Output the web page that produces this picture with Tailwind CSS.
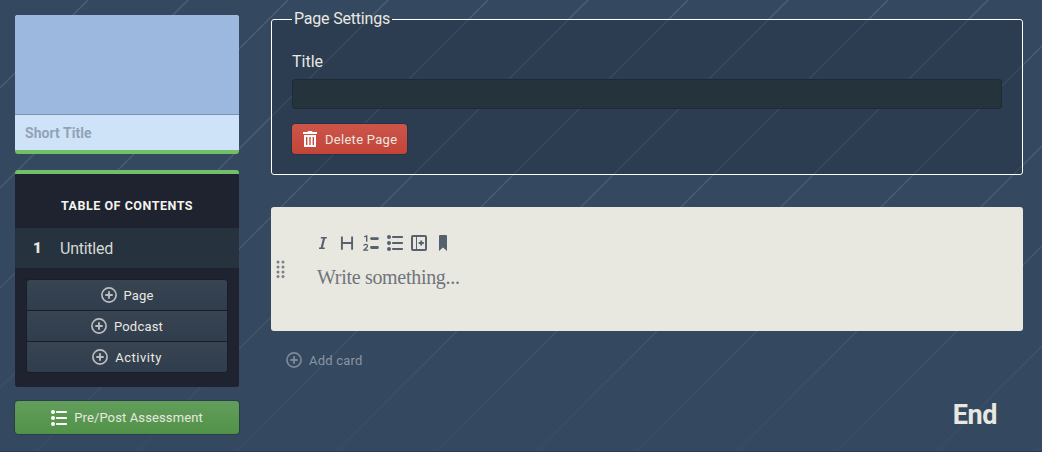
<!DOCTYPE html>
<html lang="en">
<head>
<meta charset="utf-8">
<title>Page editor</title>
<script src="https://cdn.jsdelivr.net/npm/@tailwindcss/browser@4"></script>
</head>
<body class="relative h-[452px] w-[1042px] overflow-hidden bg-[#34485f] font-['Roboto',sans-serif] text-[#e8e8e0]">
<svg class="absolute inset-0" width="1042" height="452">
  <defs>
    <pattern id="stripes" width="100" height="100" patternUnits="userSpaceOnUse">
      <path d="M-22 110L110 -22M78 110L110 78M-22 10L10 -22" stroke="#495d76" stroke-width="1.5" fill="none"/>
    </pattern>
    <linearGradient id="fade" x1="0" y1="0" x2="0" y2="1">
      <stop offset="0" stop-color="#34485f" stop-opacity="0"/>
      <stop offset="0.45" stop-color="#34485f" stop-opacity="0.1"/>
      <stop offset="1" stop-color="#34485f" stop-opacity="0.85"/>
    </linearGradient>
    <symbol id="plus" viewBox="0 0 16 16"><circle cx="8" cy="8" r="7.1" fill="none" stroke="currentColor" stroke-width="1.7"/><path d="M8 4.3v7.4M4.3 8h7.4" stroke="currentColor" stroke-width="1.9"/></symbol>
    <symbol id="list" viewBox="0 0 16 16"><g fill="currentColor"><circle cx="2" cy="2" r="2"/><circle cx="2" cy="8" r="2"/><circle cx="2" cy="14" r="2"/><rect x="5" y="1" width="11" height="2" rx=".8"/><rect x="5" y="7" width="11" height="2" rx=".8"/><rect x="5" y="13" width="11" height="2" rx=".8"/></g></symbol>
  </defs>
  <rect width="1042" height="452" fill="url(#stripes)"/>
  <rect width="1042" height="452" fill="url(#fade)"/>
</svg>
<div class="relative flex h-full gap-8 border-b border-[#2c3c54] pt-[15px] pl-[15px]">
  <aside class="w-[224px] shrink-0">
    <section class="h-[139px] overflow-hidden rounded-[3px] border-b-4 border-[#73bf69] bg-[#cfe3f8]">
      <div class="h-[100px] border-b border-[#7c95b7] bg-[#9db8de]"></div>
      <div class="flex h-[35px] items-center pl-[10px] text-[14px] font-bold text-[#92a2b6]"><span class="pt-[2px] tracking-[0.05px]">Short Title</span></div>
    </section>
    <nav class="mt-4 h-[217px] overflow-hidden rounded-[3px] border-t-4 border-[#73bf69] bg-[#1e232f]">
      <h2 class="flex h-[54px] items-center justify-center pt-[11px] text-[12.5px] font-bold text-[#f4f4ee]"><span class="tracking-[0.53px]">TABLE OF CONTENTS</span></h2>
      <div class="flex h-10 items-center bg-[#27323f]"><span class="w-[45px] pt-px pl-[18px] text-[15px] font-black">1</span><span class="pt-px text-[16px] tracking-[-0.25px] text-[#d6d8d4]">Untitled</span></div>
      <div class="mx-[11px] mt-[11px] divide-y divide-[#17202a] overflow-hidden rounded-[4px] border border-[#17202a] text-[13px]">
        <div class="flex h-[31px] items-center justify-center gap-[7px] bg-linear-to-b from-[#384451] to-[#303d4d]"><svg class="size-4 text-[#babec1]"><use href="#plus"/></svg><span class="pt-px tracking-[0.1px]">Page</span></div>
        <div class="flex h-[31px] items-center justify-center gap-[7px] bg-linear-to-b from-[#384451] to-[#303d4d]"><svg class="size-4 text-[#babec1]"><use href="#plus"/></svg><span class="pt-px tracking-[0.2px]">Podcast</span></div>
        <div class="flex h-[30px] items-center justify-center gap-[7px] bg-linear-to-b from-[#384451] to-[#303d4d]"><svg class="size-4 text-[#babec1]"><use href="#plus"/></svg><span class="pt-[2px] tracking-[0.5px]">Activity</span></div>
      </div>
    </nav>
    <div class="-mx-px mt-[13px] flex h-[35px] items-center justify-center gap-[7px] rounded-[4px] border border-[#2b3c4d] bg-linear-to-b from-[#629e5b] to-[#519248] text-[13px]"><svg class="size-4 text-white"><use href="#list"/></svg><span class="tracking-[0.12px]">Pre/Post Assessment</span></div>
  </aside>
  <main class="w-[752px]">
    <fieldset class="-mt-[6px] h-[166px] rounded-[3px] border border-white bg-[#202b3d]/40 px-5">
      <legend class="h-[20px] px-[2px] text-[16px] leading-[20px]"><span class="tracking-[-0.2px]">Page Settings</span></legend>
      <label class="mt-[23px] block text-[16px] leading-[20px]"><span>Title</span></label>
      <div class="mt-[7px] h-[30px] rounded-[3px] border border-[#202a36] bg-[#243139]/85"></div>
      <div class="mt-[14px] -ml-px flex h-[32px] w-[117px] items-center gap-[8px] rounded-[4px] border border-[#263445] bg-linear-to-b from-[#cc554a] to-[#c44438] pl-[11px] text-[13px]">
        <svg width="14" height="16" viewBox="0 0 14 16" fill="#fff"><path d="M4.7 0h4.6v1H14v2H0V1h4.7zM1 4h12v12H1zM3 6v8h1.4V6zM6.3 6v8h1.4V6zM9.6 6v8H11V6z" fill-rule="evenodd"/></svg>
        <span class="pt-[2px] tracking-[0.28px]">Delete Page</span></div>
    </fieldset>
    <section class="mt-8 flex h-[124px] rounded-[3px] bg-[#e8e8e0] text-[#56616e]">
      <svg class="mt-[53px] ml-[5px] shrink-0" width="10" height="19" fill="#7b8188"><circle cx="2" cy="2" r="1.5"/><circle cx="7" cy="2" r="1.5"/><circle cx="2" cy="7" r="1.5"/><circle cx="7" cy="7" r="1.5"/><circle cx="2" cy="12" r="1.5"/><circle cx="7" cy="12" r="1.5"/><circle cx="2" cy="16.5" r="1.5"/><circle cx="7" cy="16.5" r="1.5"/></svg>
      <div class="ml-[29px] pt-[28px]">
        <div class="flex gap-2">
          <svg width="16" height="16" viewBox="0 0 16 16" fill="none" stroke="currentColor"><path d="M5.8 2.8h6M4 13.3h5.8" stroke-width="1.5"/><path d="M9.2 2.8L6.6 13.3" stroke-width="2.1"/></svg>
          <svg width="16" height="16" viewBox="0 0 16 16" fill="none" stroke="currentColor" stroke-width="1.9"><path d="M2.9 1.5v13.2M13.1 1.5v13.2M3 8h10"/></svg>
          <svg width="16" height="16" viewBox="0 0 16 16" fill="none" stroke="currentColor"><path d="M1.2 1.8L3.7.9v5.8" stroke-width="1.4"/><path d="M.8 10.8C1 8.8 4.6 8.9 4.5 11c0 1.4-2.4 2.6-3.6 4.2H5.2" stroke-width="1.3"/><path d="M8.5 3.6h6M8.5 12.5h6" stroke-width="2.8" stroke-linecap="round"/></svg>
          <svg class="size-4"><use href="#list"/></svg>
          <svg width="16" height="16" viewBox="0 0 16 16" fill="none" stroke="currentColor"><rect x="1" y="1" width="14" height="14" rx="1" stroke-width="2"/><path d="M5.5 1v14" stroke-width="1"/><path d="M10.2 5.4v5.2M7.6 8h5.2" stroke-width="1.9"/></svg>
          <svg width="16" height="16" viewBox="0 0 16 16" fill="currentColor"><path d="M5 0h6q1 0 1 1v15l-4-3.5L4 16V1q0-1 1-1z"/></svg>
        </div>
        <p class="mt-[11px] pl-[2px] font-['Liberation_Serif',serif] text-[20px] leading-[30px] text-[#6f757c]"><span class="tracking-[-0.3px]">Write something...</span></p>
      </div>
    </section>
    <div class="mt-[21px] ml-[15px] flex h-4 items-center gap-[7px] text-[13px] text-[#8995a1]"><svg class="size-4 text-[#7d8996]"><use href="#plus"/></svg><span class="pt-[2px] tracking-[0.2px]">Add card</span></div>
    <div class="mt-[31px] pr-[26px] text-right text-[27px] leading-[32px] font-bold"><span class="tracking-[-0.4px]">End</span></div>
  </main>
</div>
</body>
</html>
